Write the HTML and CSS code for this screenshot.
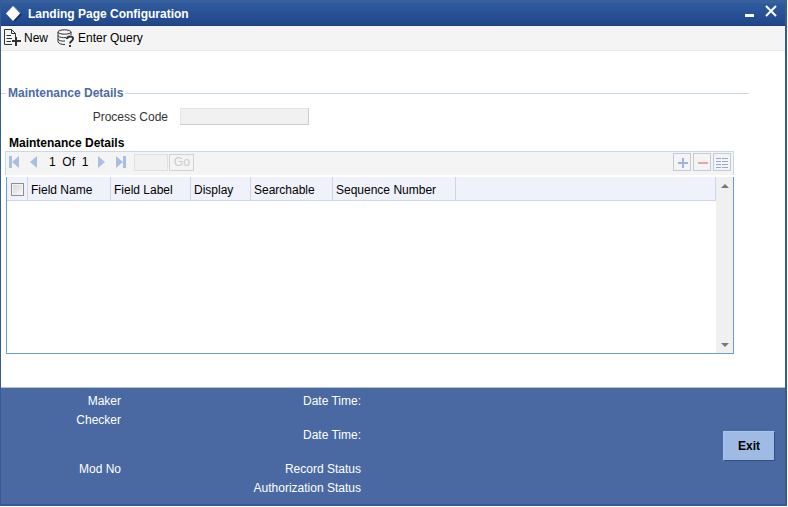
FILE: index.html
```html
<!DOCTYPE html>
<html lang="en">
<head>
  <meta charset="UTF-8">
  <meta name="viewport" content="width=device-width, initial-scale=1.0">
  <title>Landing Page Configuration</title>
  <link rel="stylesheet" href="styles.css">
</head>
<body>
  <div class="window">
    <header class="titlebar">
      <svg class="logo" width="17" height="16" viewBox="0 0 17 16"><path d="M9 1.500L16 8L9 15" fill="none" stroke="#16305f" stroke-width="2"/><path d="M9 0.500L16 7.500" fill="none" stroke="#7fa3d8"/><path d="M8 0L15 7.500L8 15L1 7.500Z" fill="#fff"/></svg>
      <h1 class="title">Landing Page Configuration</h1>
      <button class="win-btn" aria-label="Minimize"><svg width="9" height="12" viewBox="0 0 9 12"><path d="M0 9h9v3H0z" fill="#fff"/></svg></button>
      <button class="win-btn" aria-label="Close"><svg width="12" height="12" viewBox="0 0 12 12"><path d="M1 1L11 11M11 1L1 11" stroke="#fff" stroke-width="2"/></svg></button>
    </header>

    <nav class="toolbar">
      <button class="tool">
        <svg width="18" height="18" viewBox="0 0 18 18" fill="none" stroke="#333"><path d="M9 15.500H1.500V0.500H8.500L12.500 4.500V8M8.500 0.500V4.500H12.500M3.500 6.500H8M3.500 9.500H9M3.500 12.500H8"/><path d="M13 8V17M9 12H18" stroke-width="2"/></svg>
        New
      </button>
      <button class="tool">
        <svg width="18" height="18" viewBox="0 0 18 18" fill="none" stroke="#333"><ellipse cx="7.500" cy="3" rx="6.500" ry="2.200"/><path d="M1 3V13C2 15 5 15.500 8 15.500M14 3V6M1 6.500C2 8.500 6 9 9 8.500M1 10C2 12 5 12.300 8 12"/><path d="M10 10C10 6.500 16.500 6.500 16 10C15.800 12 13 12 13 14.500M13 16V18" stroke-width="2"/></svg>
        Enter Query
      </button>
    </nav>

    <main class="content">
      <fieldset class="details">
        <legend>Maintenance Details</legend>
        <div class="field">
          <label for="process-code">Process Code</label>
          <input type="text" id="process-code" disabled>
        </div>
      </fieldset>

      <section class="grid">
        <h2 class="grid-title">Maintenance Details</h2>
        <div class="pager">
          <button class="nav-btn" aria-label="First"><svg width="11" height="12" viewBox="0 0 11 12"><path d="M0 0h3v12H0zM10 0v12L3 6z"/></svg></button>
          <button class="nav-btn" aria-label="Previous"><svg width="11" height="12" viewBox="0 0 11 12"><path d="M9 0v12L2 6z"/></svg></button>
          <span class="page">1&nbsp; Of &nbsp;1</span>
          <button class="nav-btn" aria-label="Next"><svg width="11" height="12" viewBox="0 0 11 12"><path d="M2 0v12L9 6z"/></svg></button>
          <button class="nav-btn" aria-label="Last"><svg width="11" height="12" viewBox="0 0 11 12"><path d="M8 0h3v12H8zM1 0v12L8 6z"/></svg></button>
          <div class="goto">
            <input type="text" class="page-input" aria-label="Page" disabled>
            <button class="go" disabled>Go</button>
          </div>
          <div class="row-actions">
            <button class="row-btn" aria-label="Add row"><svg width="12" height="12" viewBox="0 0 12 12"><path d="M7 2V12M2 7H12" stroke="#9db4dc" stroke-width="2"/></svg></button>
            <button class="row-btn" aria-label="Delete row"><svg width="12" height="12" viewBox="0 0 12 12"><path d="M2 7H12" stroke="#f0a3a0" stroke-width="2"/></svg></button>
            <button class="row-btn" aria-label="Single record view"><svg width="12" height="12" viewBox="0 0 12 12"><path d="M0 2.500H5M6 2.500H12M0 5.500H5M6 5.500H12M0 8.500H5M6 8.500H12M0 11.500H5M6 11.500H12" stroke="#8fa9d8"/></svg></button>
          </div>
        </div>
        <div class="table-box">
          <div class="table-area">
            <table>
              <thead>
                <tr>
                  <th class="col-check"><input type="checkbox" aria-label="Select all"></th>
                  <th class="col-name">Field Name</th>
                  <th class="col-label">Field Label</th>
                  <th class="col-display">Display</th>
                  <th class="col-search">Searchable</th>
                  <th class="col-seq">Sequence Number</th>
                  <th></th>
                </tr>
              </thead>
            </table>
          </div>
          <div class="scrollbar">
            <button aria-label="Scroll up"><svg width="8" height="4" viewBox="0 0 8 4"><path d="M0 4L4 0L8 4z"/></svg></button>
            <button aria-label="Scroll down"><svg width="8" height="4" viewBox="0 0 8 4"><path d="M0 0L4 4L8 0z"/></svg></button>
          </div>
        </div>
      </section>
    </main>

    <footer class="audit">
      <div class="audit-col audit-left">
        <span>Maker</span>
        <span>Checker</span>
        <span class="gap">Mod No</span>
      </div>
      <div class="audit-col audit-right">
        <span>Date Time:</span>
        <span class="space">Date Time:</span>
        <span class="space">Record Status</span>
        <span>Authorization Status</span>
      </div>
      <button class="exit">Exit</button>
    </footer>
  </div>
</body>
</html>
```
FILE: styles.css
```css
*{
  box-sizing: border-box;
}
body{
  margin: 0;
  font-family: Arial, "Liberation Sans", sans-serif;
  font-size: 12px;
  color: #000;
  background-color: #fff;
}
button, input{
  font: inherit;
  margin: 0;
  padding: 0;
}
button{
  border: none;
  background: none;
  color: inherit;
  cursor: pointer;
}
svg{
  display: block;
}
.window{
  display: flex;
  flex-direction: column;
  min-height: calc(100vh - 1px);
  margin-right: 1px;
  border: 1px solid #345a98;
  border-width: 0 2px 2px 1px;
}
.titlebar{
  display: flex;
  align-items: center;
  height: 26px;
  padding: 0 8px 0 4px;
  border-top: 3px solid #3a609c;
  border-bottom: 1px solid #1c3c78;
  background: linear-gradient(#2f5c9f, #21468a);
  color: #fff;
}
.title{
  flex: 1;
  margin: 0 0 0 6px;
  font-size: 12px;
}
.win-btn{
  margin-left: 11px;
  padding-bottom: 7px;
}
.toolbar{
  display: flex;
  gap: 9px;
  height: 25px;
  padding-left: 2px;
  background-color: #f4f4f4;
  border-bottom: 1px solid #e9e9e9;
}
.tool{
  display: flex;
  align-items: center;
  gap: 3px;
}
.content{
  display: flex;
  flex-direction: column;
  flex: 1;
  padding: 34px 36px 33px 0;
}
.details{
  margin: 0;
  padding: 0 0 10px;
  border: none;
  border-top: 1px solid #c9d5e8;
}
.details legend{
  margin-left: 5px;
  padding: 0 2px;
  font-weight: bold;
  line-height: 16px;
  color: #4a6ca8;
}
.field{
  display: flex;
  align-items: center;
  padding-top: 7px;
  color: #333;
}
.field label{
  width: 167px;
  text-align: right;
}
.field input{
  width: 129px;
  height: 17px;
  margin-left: 12px;
  border: 1px solid #e4e4e4;
  border-right-color: #ccc;
  border-bottom-color: #ccc;
  background-color: #f1f1f1;
}
.grid{
  display: flex;
  flex-direction: column;
  flex: 1;
  margin: 0 15px 0 4px;
}
.grid-title{
  margin: 0 0 0 4px;
  font-size: 12px;
  line-height: 16px;
}
.pager{
  display: flex;
  align-items: center;
  height: 24px;
  padding: 0 2px 3px 3px;
  border: 1px solid #c9d8e6;
  border-bottom: none;
  background-color: #f4f4f4;
}
.nav-btn{
  margin-right: 8px;
}
.nav-btn svg{
  fill: #a9bfe2;
}
.page{
  margin: 0 8px 0 2px;
}
.goto{
  display: flex;
  gap: 1px;
}
.page-input{
  width: 34px;
  height: 17px;
  border: 1px solid #e0e0e0;
  background-color: #f1f1f1;
}
.go{
  width: 25px;
  height: 17px;
  border: 1px solid #ccd2da;
  color: #ccc;
}
.row-actions{
  display: flex;
  gap: 2px;
  margin-left: auto;
}
.row-btn{
  display: flex;
  align-items: center;
  justify-content: center;
  width: 18px;
  height: 18px;
  border: 1px solid #c3cbd6;
}
.table-box{
  display: flex;
  flex: 1;
  margin: 2px 0 0 1px;
  border: 1px solid #6c9bd8;
  border-top: none;
}
.table-area{
  flex: 1;
}
table{
  width: 100%;
  table-layout: fixed;
  border-collapse: separate;
  border-spacing: 0;
}
th{
  height: 24px;
  padding: 2px 3px 0;
  border-right: 1px solid #ccd6e8;
  border-bottom: 1px solid #ccd9e8;
  background-color: #eff2fb;
  font-weight: normal;
  text-align: left;
  white-space: nowrap;
}
.col-check{
  width: 21px;
}
.col-check input{
  display: block;
  appearance: none;
  width: 13px;
  height: 13px;
  margin-left: 1px;
  border: 1px solid #8e8f8f;
  background: linear-gradient(135deg, #d5d5d5, #fafafa);
  box-shadow: inset 0 0 0 1px #f4f4f4;
}
.col-name{
  width: 83px;
}
.col-label{
  width: 80px;
}
.col-display{
  width: 60px;
}
.col-search{
  width: 82px;
}
.col-seq{
  width: 123px;
}
.scrollbar{
  display: flex;
  flex-direction: column;
  justify-content: space-between;
  width: 17px;
  padding: 7px 4px 6px 5px;
  background-color: #f0f0f0;
}
.scrollbar svg{
  fill: #777;
}
.audit{
  display: flex;
  min-height: 117px;
  padding: 4px 10px 4px 0;
  border-top: 1px solid #b3bfd8;
  background-color: #4a69a2;
  color: #fff;
}
.audit-col{
  display: flex;
  flex-direction: column;
  text-align: right;
  line-height: 19px;
}
.audit-left{
  width: 120px;
}
.audit-right{
  width: 240px;
}
.space{
  margin-top: 15px;
}
.gap{
  margin-top: 30px;
}
.exit{
  width: 52px;
  height: 30px;
  margin: 39px 0 0 auto;
  border: 1px solid #a9c4e8;
  border-right-color: #31507f;
  border-bottom-color: #31507f;
  background-color: #9fbbe3;
  color: #000;
  font-weight: bold;
}
```
